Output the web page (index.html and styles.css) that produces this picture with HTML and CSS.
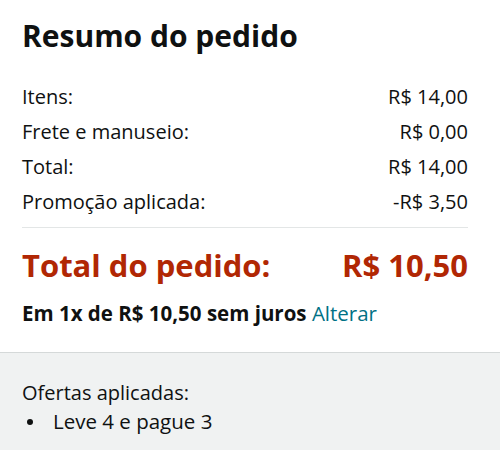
FILE: index.html
```html
<!DOCTYPE html>
<html lang="pt-BR">
<head>
<meta charset="utf-8">
<title>Resumo do pedido</title>
<link rel="stylesheet" href="styles.css">
</head>
<body>
<section class="summary">
  <h1 class="title">Resumo do pedido</h1>
  <div class="rows">
    <div class="row"><span>Itens:</span><span>R$ 14,00</span></div>
    <div class="row"><span>Frete e manuseio:</span><span>R$ 0,00</span></div>
    <div class="row"><span>Total:</span><span>R$ 14,00</span></div>
    <div class="row"><span>Promoção aplicada:</span><span>-R$ 3,50</span></div>
  </div>
  <div class="grand">
    <span>Total do pedido:</span><span>R$ 10,50</span>
  </div>
  <p class="installments">Em 1x de R$ 10,50 sem juros <a class="link" href="#">Alterar</a></p>
</section>
<section class="offers">
  <div class="offers-title">Ofertas aplicadas:</div>
  <ul class="offers-list">
    <li class="offer">Leve 4 e pague 3</li>
  </ul>
</section>
</body>
</html>
```
FILE: styles.css
```css
html, body {
  margin: 0;
  padding: 0;
  background: #ffffff;
}
body {
  font-family: "Open Sans", "Noto Sans", sans-serif;
  color: #0f1111;
  width: 500px;
  height: 450px;
  overflow: hidden;
}
.summary {
  padding: 18px 32px 27px 22px;
}
.title {
  margin: 0;
  font-size: 30px;
  line-height: 36px;
  font-weight: 700;
}
.rows {
  margin-top: 25px;
  padding-bottom: 8px;
  border-bottom: 1px solid #e3e6e6;
}
.row {
  display: flex;
  justify-content: space-between;
  font-size: 20px;
  line-height: 35px;
}
.grand {
  display: flex;
  justify-content: space-between;
  margin-top: 19px;
  font-size: 31px;
  line-height: 36px;
  font-weight: 700;
  color: #b12704;
}
.installments {
  margin: 18px 0 0;
  font-size: 20.5px;
  line-height: 24px;
  font-weight: 700;
}
.link {
  color: #007185;
  font-weight: 400;
  text-decoration: none;
}
.offers {
  border-top: 1px solid #d5d9d9;
  background: #f0f2f2;
  padding: 26px 22px 20px;
  font-size: 20px;
  line-height: 28px;
}
.offers-list {
  margin: 0;
  padding-left: 31px;
  list-style: none;
}
.offer {
  font-size: 20.5px;
}
.offer::before {
  content: "";
  display: inline-block;
  width: 6px;
  height: 6px;
  border-radius: 50%;
  background: #0f1111;
  margin-left: -26px;
  margin-right: 20px;
  vertical-align: 4px;
}
```
